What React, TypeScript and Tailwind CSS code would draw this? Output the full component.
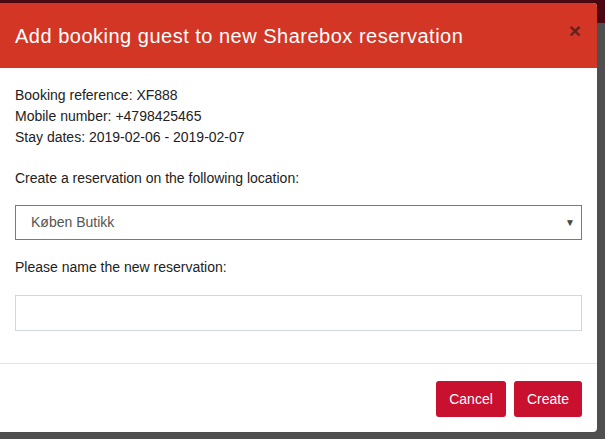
export default function App() {
  return (
    <div className="relative h-[439px] w-[605px] overflow-hidden bg-[#4f4f4f] font-['Liberation_Sans',Arial,sans-serif]">
      <div className="absolute left-0 right-0 top-0 h-[23px] bg-[#4a0813]" />
      <div className="relative mt-[3px] flex h-[429px] w-[597px] flex-col overflow-hidden rounded-r-[4px] bg-white">
        <div className="flex h-[65px] shrink-0 items-center justify-between bg-[#d33625] pl-[15px] pr-[15px]">
          <h1 className="text-[20px] leading-none tracking-[0.5px] text-white">Add booking guest to new Sharebox reservation</h1>
          <button type="button" className="-mt-[10px] mr-[1px] text-[21px] font-bold leading-none text-[#5e2420]">
            ×
          </button>
        </div>
        <div className="px-[15px] pt-[17px] text-[14px] leading-[21px] text-[#222]">
          <div>Booking reference: XF888</div>
          <div>Mobile number: +4798425465</div>
          <div>Stay dates: 2019-02-06 - 2019-02-07</div>
          <p className="mt-[20px]">Create a reservation on the following location:</p>
          <div className="mt-[16px] flex h-[35px] items-center justify-between border border-[#3c8dbc] pl-[15px] pr-[6px] text-[#555]">
            <span>Køben Butikk</span>
            <span className="text-[10px] text-[#444]">▼</span>
          </div>
          <p className="mt-[17px]">Please name the new reservation:</p>
          <input type="text" className="mt-[17px] block h-[36px] w-full border border-[#d2d6de] outline-none" />
        </div>
        <div className="mt-[32px] flex flex-1 items-start justify-end gap-[8px] border-t border-[#e5e5e5] pr-[15px] pt-[17px]">
          <button type="button" className="h-[36px] w-[70px] rounded-[3px] bg-[#c9102f] text-[14px] text-white">
            Cancel
          </button>
          <button type="button" className="h-[36px] w-[68px] rounded-[3px] bg-[#c9102f] text-[14px] text-white">
            Create
          </button>
        </div>
      </div>
    </div>
  );
}
